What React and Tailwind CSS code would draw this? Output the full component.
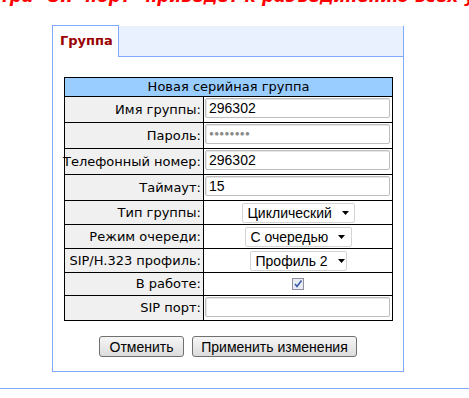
import React from 'react';

const labelFont = { fontFamily: '"DejaVu Sans", Verdana, sans-serif' };
const fieldFont = { fontFamily: '"Liberation Sans", Tahoma, Arial, sans-serif' };

const Caret = () => (
  <svg width="7" height="4" viewBox="0 0 7 4" className="ml-[10px] shrink-0">
    <path d="M0 0 H7 L3.5 4 Z" fill="#000" />
  </svg>
);

const Select = ({ value, width }) => (
  <div className={`flex items-center justify-between h-[20px] pl-[5px] pr-[7px] bg-white border border-[#d4d4d4] rounded-[2px] text-[14px] text-black whitespace-nowrap ${width}`}>
    <span className="leading-none">{value}</span>
    <Caret />
  </div>
);

const Input = ({ value, password }) => (
  <div className="mt-px ml-px h-[20px] w-[185px] border border-[#bdbdbd] rounded-[2px] bg-white flex items-center pl-[3px] text-[14px] text-black shadow-[inset_1px_1px_0_#e6e6e6]">
    {password ? (
      <span className="text-[#8a8a8a] text-[8px] tracking-[0.3px]">●●●●●●●●</span>
    ) : (
      <span className="leading-none">{value}</span>
    )}
  </div>
);

const Row = ({ label, height, children, center }) => (
  <div className={`flex border-t border-black ${height}`}>
    <div className="w-[139px] border-r border-black bg-[#f0f0f0] flex items-center justify-end pr-[2px] text-[13px] text-black whitespace-nowrap" style={labelFont}>
      {label}
    </div>
    <div className={`flex-1 flex ${center ? 'items-center justify-center' : 'items-start'}`} style={fieldFont}>
      {children}
    </div>
  </div>
);

export default function App() {
  return (
    <div className="w-[469px] h-[398px] bg-white overflow-hidden">
      <div className="h-[7px] overflow-hidden">
        <div className="-mt-[12px] text-[17px] leading-[17px] font-bold italic text-[#ff0000] whitespace-nowrap" style={labelFont}>
          тра "SIP порт" приведет к разъединению всех участников
        </div>
      </div>

      <div className="mt-[18px] ml-[52px] w-[352px]">
        <div className="flex h-[32px]">
          <div className="w-[67px] border-l border-t border-r border-[#80aaff] bg-white pt-[5px] pl-[7px] text-[13px] font-bold text-[#990000]" style={labelFont}>
            Группа
          </div>
          <div className="flex-1 mt-px bg-[#eaf1fe] border-b border-r border-[#80aaff]" />
        </div>

        <div className="border-l border-r border-b border-[#80aaff] pl-[11px] pt-[20px] pb-[14px]">
          <div className="w-[329px] border-l border-r border-b border-black">
            <div className="h-[19px] bg-[#99ccff] border-t border-black flex items-center justify-center text-[13px] text-black" style={labelFont}>
              Новая серийная группа
            </div>
            <Row label="Имя группы:" height="h-[26px]"><Input value="296302" /></Row>
            <Row label="Пароль:" height="h-[26px]"><Input password /></Row>
            <Row label="Телефонный номер:" height="h-[26px]"><Input value="296302" /></Row>
            <Row label="Таймаут:" height="h-[26px]"><Input value="15" /></Row>
            <Row label="Тип группы:" height="h-[24px]" center><Select value="Циклический" width="w-[113px]" /></Row>
            <Row label="Режим очереди:" height="h-[24px]" center><Select value="С очередью" width="w-[107px]" /></Row>
            <Row label="SIP/H.323 профиль:" height="h-[24px]" center><Select value="Профиль 2" width="w-[97px]" /></Row>
            <Row label="В работе:" height="h-[23px]" center>
              <svg width="12" height="12" viewBox="0 0 12 12">
                <rect x="0.5" y="0.5" width="11" height="11" fill="#e8ecf4" stroke="#8f8f9d" />
                <path d="M3 6 L5 8.5 L9.5 2.5" fill="none" stroke="#3b5aa8" strokeWidth="1.6" />
              </svg>
            </Row>
            <Row label="SIP порт:" height="h-[25px]"><Input value="" /></Row>
          </div>

          <div className="flex justify-center gap-[8px] mt-[15px] pr-[11px]" style={fieldFont}>
            <button className="w-[85px] h-[21px] border border-[#707070] rounded-[3px] bg-gradient-to-b from-[#f6f6f6] to-[#dcdcdc] text-[14px] text-black leading-none">
              Отменить
            </button>
            <button className="w-[165px] h-[21px] border border-[#707070] rounded-[3px] bg-gradient-to-b from-[#f6f6f6] to-[#dcdcdc] text-[14px] text-black leading-none">
              Применить изменения
            </button>
          </div>
        </div>
      </div>

      <div className="mt-[16px] h-px bg-[#80aaff]" />
    </div>
  );
}
